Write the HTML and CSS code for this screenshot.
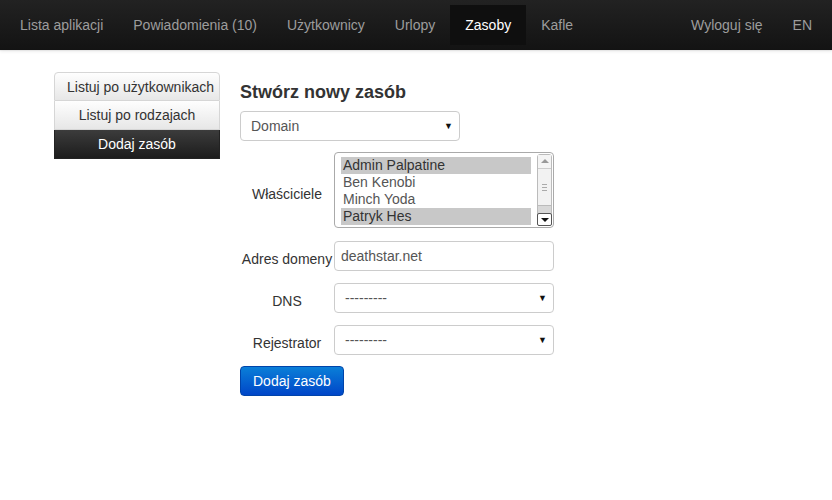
FILE: index.html
```html
<!DOCTYPE html>
<html lang="pl">
<head>
<meta charset="utf-8">
<title>Zasoby</title>
<link rel="stylesheet" href="styles.css">
</head>
<body>
<nav class="navbar">
  <ul class="nav">
    <li><a href="#">Lista aplikacji</a></li>
    <li><a href="#">Powiadomienia (10)</a></li>
    <li><a href="#">Użytkownicy</a></li>
    <li><a href="#">Urlopy</a></li>
    <li class="active"><a href="#">Zasoby</a></li>
    <li><a href="#">Kafle</a></li>
  </ul>
  <ul class="nav nav-right">
    <li><a href="#">Wyloguj się</a></li>
    <li><a href="#">EN</a></li>
  </ul>
</nav>
<div class="main">
  <div class="sidebar">
    <a class="side-item first" href="#">Listuj po użytkownikach</a>
    <a class="side-item" href="#">Listuj po rodzajach</a>
    <a class="side-item active" href="#">Dodaj zasób</a>
  </div>
  <div class="content">
    <h1 class="title">Stwórz nowy zasób</h1>
    <div class="select type-select"><span>Domain</span><span class="arrow">▼</span></div>
    <div class="form">
      <label class="lbl">Właściciele</label>
      <div class="multi">
        <div class="options">
          <div class="opt sel">Admin Palpatine</div>
          <div class="opt">Ben Kenobi</div>
          <div class="opt">Minch Yoda</div>
          <div class="opt sel">Patryk Hes</div>
        </div>
        <div class="scrollbar">
          <div class="sb-up"></div>
          <div class="sb-thumb"><span></span><span></span><span></span></div>
          <div class="sb-track"></div>
          <div class="sb-down"></div>
        </div>
      </div>
      <label class="lbl">Adres domeny</label>
      <div class="input">deathstar.net</div>
      <label class="lbl">DNS</label>
      <div class="select"><span>---------</span><span class="arrow">▼</span></div>
      <label class="lbl">Rejestrator</label>
      <div class="select"><span>---------</span><span class="arrow">▼</span></div>
    </div>
    <button class="btn-primary">Dodaj zasób</button>
  </div>
</div>
</body>
</html>
```

FILE: styles.css
```css
* { box-sizing: border-box; }
body {
  margin: 0;
  font-family: "Liberation Sans", Arial, sans-serif;
  font-size: 14px;
  color: #333;
  background: #fff;
}
.navbar {
  height: 50px;
  display: flex;
  justify-content: space-between;
  padding: 0 5px;
  background: linear-gradient(to bottom, #222 0, #131313 100%);
  box-shadow: 0 2px 3px rgba(0,0,0,0.06), 0 1px 1px rgba(0,0,0,0.05);
}
.nav {
  list-style: none;
  margin: 0;
  padding: 0;
  display: flex;
}
.nav li a {
  display: block;
  margin-top: 5px;
  height: 40px;
  padding: 10px 15px;
  line-height: 20px;
  color: #9d9d9d;
  text-decoration: none;
}
.nav li.active a {
  background: #0f0f0f;
  color: #fff;
}
.main {
  display: flex;
  gap: 20px;
  padding: 22px 0 0 54px;
}
.sidebar {
  width: 166px;
  display: flex;
  flex-direction: column;
}
.side-item {
  display: block;
  height: 29px;
  padding: 0 12px;
  white-space: nowrap;
  text-align: center;
  color: #333;
  text-decoration: none;
  background: linear-gradient(to bottom, #fefefe 0, #e7e7e7 100%);
  border: 1px solid #d6d6d6;
  border-top: none;
  line-height: 28px;
}
.side-item.first {
  border-top: 1px solid #d6d6d6;
  border-radius: 4px 4px 0 0;
}
.side-item.active {
  background: linear-gradient(to bottom, #3c3c3c 0, #1c1c1c 100%);
  border-color: #222;
  color: #fff;
}
.content {
  width: 320px;
}
.title {
  margin: 10px 0 8px;
  font-size: 18px;
  line-height: 21px;
  font-weight: bold;
  color: #333;
}
.select, .input {
  height: 30px;
  border: 1px solid #ccc;
  border-radius: 4px;
  background: #fff;
  color: #555;
  display: flex;
  align-items: center;
  justify-content: space-between;
  padding: 0 6px 0 10px;
}
.type-select { width: 220px; }
.arrow {
  font-size: 9px;
  color: #111;
}
.input { padding-left: 6px; }
.form {
  margin-top: 11px;
  display: grid;
  grid-template-columns: 94px 220px;
  grid-template-rows: 77px 30px 30px 30px;
  row-gap: 12px;
  align-items: center;
}
.form .lbl {
  text-align: center;
  padding-top: 6px;
  white-space: nowrap;
}
.multi {
  align-self: start;
  height: 76px;
  border: 1px solid #aaa;
  border-radius: 4px;
  display: flex;
  padding: 4px 1px 3px 6px;
  background: #fff;
}
.options {
  flex: 1;
}
.opt {
  height: 17px;
  line-height: 17px;
  padding-left: 2px;
  color: #555;
}
.opt.sel {
  background: #c8c8c8;
  color: #333;
}
.scrollbar {
  width: 15px;
  margin-left: 6px;
  margin-top: -3px;
  margin-bottom: -2px;
  display: flex;
  flex-direction: column;
  border: 1px solid #bbb;
  border-radius: 3px;
  background: #e3e3e3;
}
.sb-up {
  height: 14px;
  position: relative;
  background: #f4f4f4;
  border-bottom: 1px solid #ccc;
}
.sb-up::after {
  content: "";
  position: absolute;
  left: 3px;
  top: 4px;
  border-left: 4px solid transparent;
  border-right: 4px solid transparent;
  border-bottom: 4px solid #999;
}
.sb-thumb {
  height: 37px;
  background: #f2f2f2;
  border-bottom: 1px solid #bbb;
  display: flex;
  flex-direction: column;
  justify-content: center;
  align-items: center;
  gap: 2px;
}
.sb-thumb span {
  width: 5px;
  height: 1px;
  background: #aaa;
}
.sb-track {
  flex: 1;
  background: #d8d8d8;
}
.sb-down {
  height: 13px;
  position: relative;
  background: #fff;
  border: 1px solid #555;
  border-radius: 2px;
  margin: 0 -1px -1px;
}
.sb-down::after {
  content: "";
  position: absolute;
  left: 3px;
  top: 4px;
  border-left: 4px solid transparent;
  border-right: 4px solid transparent;
  border-top: 4px solid #111;
}
.btn-primary {
  display: block;
  margin-top: 11px;
  height: 30px;
  padding: 0 12px;
  font-family: inherit;
  font-size: 14px;
  color: #fff;
  border: 1px solid #0044aa;
  border-radius: 4px;
  background: linear-gradient(to bottom, #0a7fd8 0, #0046c8 100%);
}
```
